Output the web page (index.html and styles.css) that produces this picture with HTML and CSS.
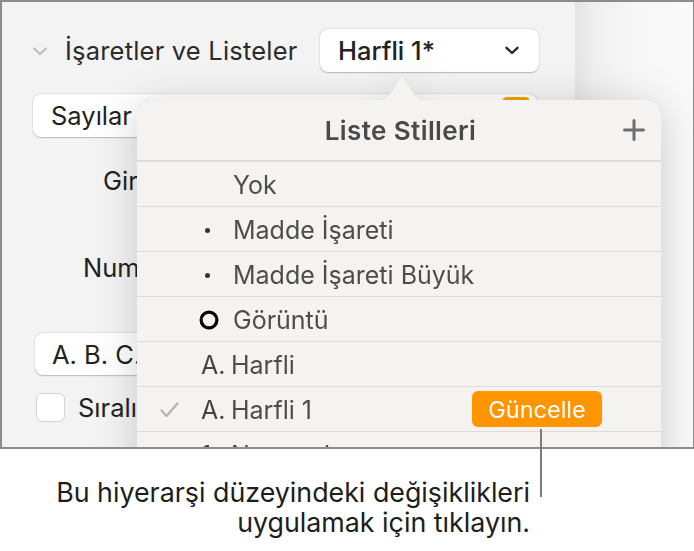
FILE: index.html
```html
<!DOCTYPE html>
<html lang="tr">
<head>
<meta charset="utf-8">
<title>Liste Stilleri</title>
<link rel="stylesheet" href="styles.css">
</head>
<body>
<div class="page">
  <div class="shot">
    <div class="sidebar">
      <div class="row-head">
        <svg class="disclosure" width="14" height="9" viewBox="0 0 14 9"><path d="M1.2 1.5 L7 7.3 L12.8 1.5" fill="none" stroke="#bdbdbd" stroke-width="2" stroke-linecap="round" stroke-linejoin="round"/></svg>
        <span class="section-title">İşaretler ve Listeler</span>
        <div class="popup popup-style">
          <span class="popup-text strong">Harfli 1*</span>
          <svg class="popup-chev" width="14" height="9" viewBox="0 0 14 9"><path d="M1.5 1.8 L7 7 L12.5 1.8" fill="none" stroke="#2a2a2a" stroke-width="2.4" stroke-linecap="round" stroke-linejoin="round"/></svg>
        </div>
      </div>
      <div class="popup popup-wide">
        <span class="popup-text">Sayılar</span>
        <span class="swatch"></span>
      </div>
      <div class="label label-indent">Girinti</div>
      <div class="label label-num">Numara</div>
      <div class="popup popup-abc"><span class="popup-text">A. B. C.</span></div>
      <div class="check-row"><span class="checkbox"></span><span class="check-label">Sıralı</span></div>
    </div>
    <div class="canvas"></div>

    <div class="popover">
      <svg class="arrow" width="58" height="27" viewBox="0 0 58 27"><path d="M0 27 C9 27 13 25 19 17 L27 3.5 Q29 0.5 31 3.5 L39 17 C45 25 49 27 58 27 Z" fill="#f4f3f2"/></svg>
      <div class="pop-head">
        <span></span>
        <span class="pop-title">Liste Stilleri</span>
        <svg class="plus" width="24" height="24" viewBox="0 0 24 24"><path d="M12 2.5 V21.5 M2.5 12 H21.5" stroke="#6e6e6e" stroke-width="3" stroke-linecap="round"/></svg>
      </div>
      <ul class="styles">
        <li class="item"><span class="check"></span><span class="mark"></span><span class="name">Yok</span></li>
        <li class="item"><span class="check"></span><span class="mark"><span class="dot"></span></span><span class="name">Madde İşareti</span></li>
        <li class="item"><span class="check"></span><span class="mark"><span class="dot"></span></span><span class="name">Madde İşareti Büyük</span></li>
        <li class="item"><span class="check"></span><span class="mark"><svg width="20" height="20" viewBox="0 0 20 20"><circle cx="10" cy="10" r="7.9" fill="none" stroke="#000" stroke-width="3.2"/></svg></span><span class="name">Görüntü</span></li>
        <li class="item"><span class="check"></span><span class="mark letter">A.</span><span class="name">Harfli</span></li>
        <li class="item"><span class="check"><svg width="19" height="16" viewBox="0 0 19 16"><path d="M1.5 8.5 L6.5 14 L17.5 1.5" fill="none" stroke="#b4b4b4" stroke-width="2.2" stroke-linecap="round" stroke-linejoin="round"/></svg></span><span class="mark letter">A.</span><span class="name">Harfli 1</span><button class="update">Güncelle</button></li>
        <li class="item"><span class="check"></span><span class="mark letter">1.</span><span class="name">Numaralı</span></li>
      </ul>
    </div>
  </div>

  <div class="caption">
    <p class="caption-line">Bu hiyerarşi düzeyindeki değişiklikleri</p>
    <p class="caption-line">uygulamak için tıklayın.</p>
  </div>
  <span class="leader"></span>
</div>
</body>
</html>
```

FILE: styles.css
```css
* { box-sizing: border-box; }

html, body {
  margin: 0;
  padding: 0;
  background: #ffffff;
}

body {
  font-family: Inter, "Noto Sans", "DejaVu Sans", sans-serif;
  width: 694px;
  height: 551px;
  overflow: hidden;
}

.page {
  position: relative;
  width: 694px;
  height: 551px;
}

.shot {
  position: relative;
  display: flex;
  width: 694px;
  height: 449px;
  border: 2px solid #8c8c8c;
  border-right-width: 1px;
  overflow: hidden;
  background: #f2f2f2;
}

.sidebar {
  width: 573px;
  flex: none;
  display: flex;
  flex-direction: column;
  padding: 27px 36px 0 31px;
  background: #f3f3f3;
  color: #262626;
  font-size: 25.5px;
}

.row-head {
  display: flex;
  align-items: center;
  height: 43px;
}

.disclosure {
  flex: none;
  margin-top: 2px;
}

.section-title {
  margin-left: 18px;
  color: #2b2b2b;
  letter-spacing: 0.2px;
}

.popup {
  display: flex;
  align-items: center;
  height: 43px;
  background: #ffffff;
  border-radius: 8px;
  box-shadow: 0 0.5px 1.5px rgba(0, 0, 0, 0.22), 0 0 0 0.5px rgba(0, 0, 0, 0.06);
  padding: 0 18px;
  white-space: nowrap;
}

.popup-text {
  color: #222;
}

.popup-text.strong {
  font-weight: 500;
}

.popup-style {
  margin-left: auto;
  width: 219px;
  flex: none;
  justify-content: space-between;
  padding-right: 20px;
}

.popup-wide {
  position: relative;
  margin-top: 22px;
  margin-right: 2px;
}

.swatch {
  position: absolute;
  right: 7px;
  top: 3px;
  width: 28px;
  height: 30px;
  border-radius: 5px;
  background: #f5a300;
}

.label {
  line-height: 30px;
  color: #222;
  white-space: nowrap;
}

.label-indent {
  margin-top: 29px;
  margin-left: 70px;
}

.label-num {
  margin-top: 57px;
  margin-left: 50px;
}

.popup-abc {
  margin-top: 50px;
  margin-left: 2px;
  width: 220px;
  height: 42px;
  padding-left: 17px;
}

.check-row {
  display: flex;
  align-items: center;
  margin-top: 17px;
  margin-left: 3px;
  gap: 13px;
}

.checkbox {
  width: 29px;
  height: 29px;
  border-radius: 6px;
  background: #ffffff;
  border: 1px solid #d2d2d2;
}

.check-label {
  color: #222;
}

.canvas {
  flex: 1;
  background: linear-gradient(to right, #e3e3e3 0px, #efefef 20px, #f7f7f7 60px, #f9f9f9 100%);
}

/* Popover */
.popover {
  position: absolute;
  left: 135px;
  top: 98px;
  width: 524px;
  height: 420px;
  background: #f4f3f2;
  border-radius: 13px;
  filter: drop-shadow(0 0 0.6px rgba(0, 0, 0, 0.25)) drop-shadow(0 6px 20px rgba(0, 0, 0, 0.18));
  color: #4d4d4d;
  font-size: 25px;
}

.arrow {
  position: absolute;
  left: 236px;
  top: -26px;
}

.pop-head {
  display: grid;
  grid-template-columns: 1fr auto 1fr;
  align-items: center;
  height: 62px;
  padding: 0 15px 0 18px;
  border-bottom: 2px solid #dddcdb;
}

.pop-title {
  font-weight: 600;
  font-size: 26px;
  letter-spacing: 0.4px;
  color: #4a4a4a;
}

.plus {
  justify-self: end;
}

.styles {
  list-style: none;
  margin: 0;
  padding: 0;
}

.item {
  display: flex;
  align-items: center;
  height: 45px;
  border-bottom: 1.5px solid #dcdbda;
  padding: 2px 59px 0 23px;
  white-space: nowrap;
}

.check {
  width: 40px;
  flex: none;
  display: flex;
  align-items: center;
}

.mark {
  width: 33px;
  flex: none;
  display: flex;
  align-items: center;
  color: #444;
}

.mark .dot {
  width: 5px;
  height: 5px;
  border-radius: 50%;
  background: #333;
  margin-left: 5px;
}

.mark svg {
  margin-left: -1px;
}

.mark.letter {
  width: 31px;
  padding-left: 1px;
}

.name {
  color: #4d4d4d;
}

.update {
  margin-left: auto;
  margin-top: -2px;
  height: 36px;
  width: 130px;
  flex: none;
  border: none;
  border-radius: 6px;
  background: #ff9500;
  color: #ffffff;
  font-family: Inter, "Noto Sans", sans-serif;
  font-size: 23.5px;
  padding: 0;
}

/* Caption */
.caption {
  margin-top: 28px;
  padding-right: 164px;
  text-align: right;
  color: #1d1d1d;
  font-size: 26.8px;
}

.caption-line {
  margin: 0;
  line-height: 30px;
  white-space: nowrap;
}

.leader {
  position: absolute;
  left: 540px;
  top: 429px;
  width: 2px;
  height: 68px;
  background: #7b7b7b;
}
```
